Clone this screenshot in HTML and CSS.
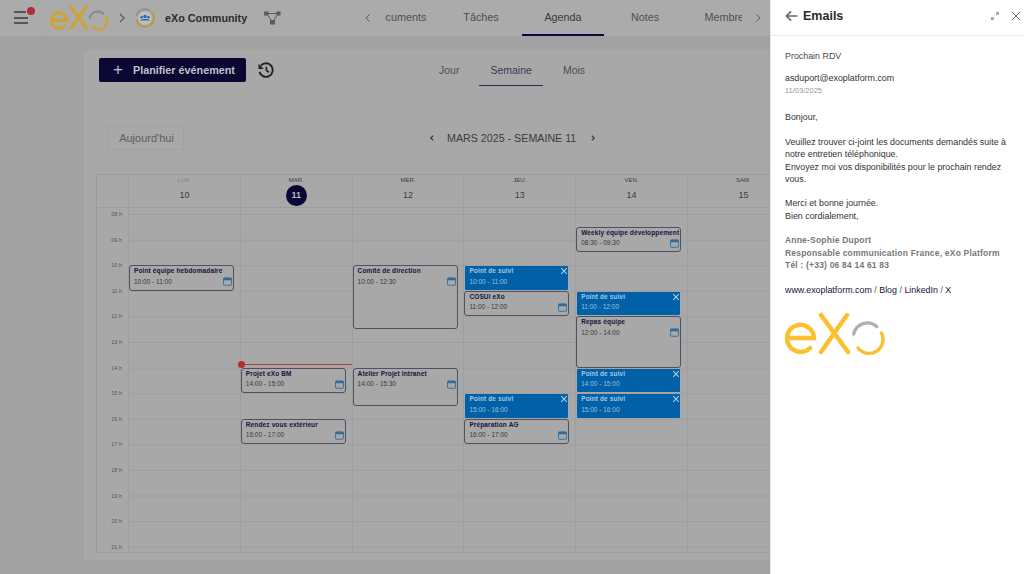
FILE: index.html
```html
<!DOCTYPE html>
<html lang="fr">
<head>
<meta charset="UTF-8">
<title>eXo Community - Agenda</title>
<link rel="stylesheet" href="styles.css">
</head>
<body>
<svg class="defs" width="0" height="0">
    <symbol id="exo-logo" viewBox="0 0 100 44">
        <g fill="none" stroke-linecap="round">
            <path class="logo-gold" d="M2 26H29A13.500 13.500 0 1 0 25 36"/>
            <path class="logo-gold" d="M36 3L63 40M62 3L36 40"/>
            <path class="logo-grey" d="M68.700 22A14 14 0 0 1 91.700 14.500"/>
            <path class="logo-gold thin" d="M96.500 21A14 14 0 0 1 73 36"/>
        </g>
    </symbol>
    <symbol id="cal" viewBox="0 0 10 10">
        <rect x="0.600" y="1" width="8.800" height="8.200" rx="1" fill="none" stroke="currentColor" stroke-width="1"/>
        <rect x="0.600" y="1" width="8.800" height="2.600" fill="currentColor"/>
    </symbol>
    <symbol id="cross" viewBox="0 0 10 10">
        <path d="M1.500 1.500L8.500 8.500M8.500 1.500L1.500 8.500" fill="none" stroke="currentColor" stroke-width="1.300"/>
    </symbol>
</svg>

<div class="app">
    <header class="topbar">
        <div class="menu-btn">
            <span class="burger"><i class="short"></i><i></i><i></i></span>
            <span class="dot"></span>
        </div>
        <svg class="top-logo"><use href="#exo-logo"/></svg>
        <svg class="crumb" viewBox="0 0 10 10"><path d="M3 1L7 5L3 9" fill="none" stroke="currentColor" stroke-width="1.300"/></svg>
        <svg class="space-icon" viewBox="0 0 20 20">
            <circle cx="10" cy="10" r="6.600" fill="#bcc0c4"/>
            <path d="M1.400 8A8.800 8.800 0 0 1 15 2.800" fill="none" stroke="#8f8f8f" stroke-width="1.600"/>
            <path d="M17 4.600A8.800 8.800 0 1 1 1.400 11.600" fill="none" stroke="#bd982f" stroke-width="1.800"/>
            <circle cx="10" cy="8.400" r="1.700" fill="#2c68a0"/>
            <circle cx="6.600" cy="9.200" r="1.300" fill="#2c68a0"/>
            <circle cx="13.400" cy="9.200" r="1.300" fill="#2c68a0"/>
            <path d="M5 12.600c.4-2 9.600-2 10 0z" fill="#2c68a0"/>
        </svg>
        <span class="space-name">eXo Community</span>
        <svg class="net-icon" viewBox="0 0 17 14">
            <path d="M2 2.500H15M3 3L8.500 11M14 3L8.500 11" stroke="#5c5c5c" stroke-width="1"/>
            <rect x="0" y="0.500" width="4.500" height="4" fill="#5c5c5c"/>
            <rect x="12.500" y="0.500" width="4" height="4" fill="#5c5c5c"/>
            <rect x="6" y="9" width="5" height="4.500" fill="#5c5c5c"/>
        </svg>
        <svg class="tab-arrow arrow-left" viewBox="0 0 10 10"><path d="M6.500 1.500L3 5L6.500 8.500" fill="none" stroke="currentColor" stroke-width="1"/></svg>
        <nav class="space-tabs">
            <div class="space-tabs-inner">
                <a>Documents</a>
                <a>Tâches</a>
                <a class="active">Agenda</a>
                <a>Notes</a>
                <a>Membres</a>
            </div>
        </nav>
        <svg class="tab-arrow" viewBox="0 0 10 10"><path d="M3.500 1.500L7 5L3.500 8.500" fill="none" stroke="currentColor" stroke-width="1"/></svg>
    </header>

    <main class="page">
        <section class="card">
            <div class="toolbar">
                <button class="add-btn"><span class="plus">+</span>Planifier événement</button>
                <svg class="history" viewBox="0 0 24 24">
                    <path d="M5.200 6.200A9 9 0 1 1 3.300 14.500" fill="none" stroke="currentColor" stroke-width="2.600"/>
                    <path d="M2 3.500V10.500H9z" fill="currentColor"/>
                    <path d="M12.500 7.500V12.500L15.800 15" fill="none" stroke="currentColor" stroke-width="2.200"/>
                </svg>
                <div class="view-tabs">
                    <a>Jour</a>
                    <a class="active">Semaine</a>
                    <a>Mois</a>
                </div>
                <div class="filter-btn"></div>
            </div>
            <div class="date-row">
                <button class="today-btn">Aujourd'hui</button>
                <div class="date-nav">
                    <svg viewBox="0 0 10 10"><path d="M6.500 2L3.500 5L6.500 8" fill="none" stroke="currentColor" stroke-width="1.600"/></svg>
                    <span>MARS 2025 - SEMAINE 11</span>
                    <svg viewBox="0 0 10 10"><path d="M3.500 2L6.500 5L3.500 8" fill="none" stroke="currentColor" stroke-width="1.600"/></svg>
                </div>
            </div>

            <div class="calendar">
                <div class="week-head">
                    <div class="head-gutter"></div>
                    <div class="head-day past"><small>LUN.</small><b>10</b></div>
                    <div class="head-day today"><small>MAR.</small><b>11</b></div>
                    <div class="head-day"><small>MER.</small><b>12</b></div>
                    <div class="head-day"><small>JEU.</small><b>13</b></div>
                    <div class="head-day"><small>VEN.</small><b>14</b></div>
                    <div class="head-day"><small>SAM.</small><b>15</b></div>
                </div>
                <div class="week-body">
                    <div class="hours">
                        <span>08 h</span><span>09 h</span><span>10 h</span><span>11 h</span><span>12 h</span><span>13 h</span><span>14 h</span>
                        <span>15 h</span><span>16 h</span><span>17 h</span><span>18 h</span><span>19 h</span><span>20 h</span><span>21 h</span>
                    </div>
                    <div class="day">
                        <div class="event" style="top:57.200px;height:25.600px">
                            <strong>Point équipe hebdomadaire</strong><span>10:00 - 11:00</span>
                            <svg class="ev-cal"><use href="#cal"/></svg>
                        </div>
                    </div>
                    <div class="day">
                        <div class="now-line" style="top:155.500px"></div>
                        <div class="event" style="top:159.600px;height:25.600px">
                            <strong>Projet eXo BM</strong><span>14:00 - 15:00</span>
                            <svg class="ev-cal"><use href="#cal"/></svg>
                        </div>
                        <div class="event" style="top:210.800px;height:25.600px">
                            <strong>Rendez vous extérieur</strong><span>16:00 - 17:00</span>
                            <svg class="ev-cal"><use href="#cal"/></svg>
                        </div>
                    </div>
                    <div class="day">
                        <div class="event" style="top:57.200px;height:64px">
                            <strong>Comité de direction</strong><span>10:00 - 12:30</span>
                            <svg class="ev-cal"><use href="#cal"/></svg>
                        </div>
                        <div class="event" style="top:159.600px;height:38.400px">
                            <strong>Atelier Projet Intranet</strong><span>14:00 - 15:30</span>
                            <svg class="ev-cal"><use href="#cal"/></svg>
                        </div>
                    </div>
                    <div class="day">
                        <div class="event busy" style="top:57.200px;height:25.600px">
                            <strong>Point de suivi</strong><span>10:00 - 11:00</span>
                            <svg class="ev-x"><use href="#cross"/></svg>
                        </div>
                        <div class="event" style="top:82.800px;height:25.600px">
                            <strong>COSUI eXo</strong><span>11:00 - 12:00</span>
                            <svg class="ev-cal"><use href="#cal"/></svg>
                        </div>
                        <div class="event busy" style="top:185.200px;height:25.600px">
                            <strong>Point de suivi</strong><span>15:00 - 16:00</span>
                            <svg class="ev-x"><use href="#cross"/></svg>
                        </div>
                        <div class="event" style="top:210.800px;height:25.600px">
                            <strong>Préparation AG</strong><span>16:00 - 17:00</span>
                            <svg class="ev-cal"><use href="#cal"/></svg>
                        </div>
                    </div>
                    <div class="day">
                        <div class="event" style="top:18.800px;height:25.600px">
                            <strong>Weekly équipe développement</strong><span>08:30 - 09:30</span>
                            <svg class="ev-cal"><use href="#cal"/></svg>
                        </div>
                        <div class="event busy" style="top:82.800px;height:25.600px">
                            <strong>Point de suivi</strong><span>11:00 - 12:00</span>
                            <svg class="ev-x"><use href="#cross"/></svg>
                        </div>
                        <div class="event" style="top:108.400px;height:51.200px">
                            <strong>Repas équipe</strong><span>12:00 - 14:00</span>
                            <svg class="ev-cal"><use href="#cal"/></svg>
                        </div>
                        <div class="event busy" style="top:159.600px;height:25.600px">
                            <strong>Point de suivi</strong><span>14:00 - 15:00</span>
                            <svg class="ev-x"><use href="#cross"/></svg>
                        </div>
                        <div class="event busy" style="top:185.200px;height:25.600px">
                            <strong>Point de suivi</strong><span>15:00 - 16:00</span>
                            <svg class="ev-x"><use href="#cross"/></svg>
                        </div>
                    </div>
                    <div class="day"></div>
                </div>
            </div>
        </section>
    </main>
</div>

<aside class="drawer">
    <header class="drawer-head">
        <svg class="back" viewBox="0 0 14 12"><path d="M13.500 6H1.500M6.500 1L1.500 6L6.500 11" fill="none" stroke="currentColor" stroke-width="1.700"/></svg>
        <h2>Emails</h2>
        <svg class="expand" viewBox="0 0 10 10"><path d="M5.800 1H9V4.200L7.900 3.100L6.600 4.400L5.600 3.400L6.900 2.100zM4.200 9H1V5.800L2.100 6.900L3.400 5.600L4.400 6.600L3.100 7.900z" fill="currentColor"/></svg>
        <svg class="close" viewBox="0 0 10 10"><path d="M1 1L9 9M9 1L1 9" fill="none" stroke="currentColor" stroke-width="1"/></svg>
    </header>
    <div class="mail">
        <p class="subject">Prochain RDV</p>
        <p class="sender">asduport@exoplatform.com</p>
        <p class="mail-date">11/03/2025</p>
        <p class="gap">Bonjour,</p>
        <p>Veuillez trouver ci-joint les documents demandés suite à notre entretien téléphonique.<br>Envoyez moi vos disponibilités pour le prochain rendez vous.</p>
        <p>Merci et bonne journée.<br>Bien cordialement,</p>
        <p class="signature">Anne-Sophie Duport<br>Responsable communication France, eXo Platform<br>Tél : (+33) 06 84 14 61 83</p>
        <p class="links"><a>www.exoplatform.com</a> / <a>Blog</a> / <a>LinkedIn</a> / <a>X</a></p>
        <svg class="mail-logo"><use href="#exo-logo"/></svg>
    </div>
</aside>
</body>
</html>
```

FILE: styles.css
```css
* {
    box-sizing: border-box;
}
html, body {
    height: 100%;
}
body {
    margin: 0;
    overflow: hidden;
    font-family: "Liberation Sans", Arial, sans-serif;
    background-color: #a2a2a2;
    color: #333;
}
.defs {
    position: absolute;
}
.logo-gold {
    stroke: var(--logo-gold, #fbc02d);
    stroke-width: var(--logo-weight, 4.500);
}
.logo-gold.thin, .logo-grey {
    stroke-width: var(--logo-thin, 3.400);
}
.logo-grey {
    stroke: var(--logo-grey, #aeb0b3);
}
.app {
    width: 1024px;
    height: 574px;
    display: flex;
    flex-direction: column;
}

/* top bar */
.topbar {
    height: 36px;
    flex: none;
    display: flex;
    align-items: center;
    background-color: #ababab;
    color: #5c5c5c;
}
.menu-btn {
    width: 43px;
    height: 36px;
    flex: none;
    position: relative;
    padding: 11px 0 0 14px;
    border-right: 1px solid #a6a6a6;
}
.burger {
    display: block;
    width: 14px;
}
.burger i {
    display: block;
    height: 2px;
    margin-bottom: 3.500px;
    background-color: #555;
}
.burger i.short {
    width: 12px;
}
.dot {
    position: absolute;
    left: 27px;
    top: 7px;
    width: 8px;
    height: 8px;
    border-radius: 50%;
    background-color: #b0303a;
}
.top-logo {
    --logo-gold: #cba433;
    --logo-grey: #8c8c8c;
    --logo-weight: 5.500;
    --logo-thin: 4;
    width: 58px;
    height: 26px;
    margin-left: 7px;
    flex: none;
}
.crumb {
    width: 10px;
    height: 10px;
    margin-left: 9px;
    flex: none;
}
.space-icon {
    width: 20px;
    height: 20px;
    margin-left: 8px;
    flex: none;
}
.space-name {
    margin-left: 10px;
    width: 82px;
    flex: none;
    font-size: 10.800px;
    font-weight: bold;
    color: #2c2c2c;
    white-space: nowrap;
}
.net-icon {
    width: 17px;
    height: 14px;
    margin-left: 17px;
    flex: none;
}
.tab-arrow {
    width: 10px;
    height: 10px;
    flex: none;
    margin-left: 11px;
}
.arrow-left {
    margin-left: 82px;
}
.space-tabs {
    width: 357px;
    height: 36px;
    margin-left: 12px;
    overflow: hidden;
    flex: none;
}
.space-tabs-inner {
    display: flex;
    margin-left: -27px;
}
.space-tabs a {
    width: 82px;
    height: 36px;
    flex: none;
    line-height: 34px;
    text-align: center;
    font-size: 10.800px;
    color: #4f4f4f;
}
.space-tabs a.active {
    border-bottom: 2px solid #0c0a3a;
    color: #3b3b3b;
}

/* calendar card */
.page {
    flex: 1;
    padding: 14px 0 0 84px;
    overflow: hidden;
}
.card {
    width: 940px;
    height: 510px;
    padding: 8px 0 0 12px;
    background-color: #a8a8a8;
}
.toolbar {
    height: 28px;
    display: flex;
    align-items: flex-start;
    padding-left: 3px;
}
.add-btn {
    width: 147px;
    height: 24px;
    flex: none;
    display: flex;
    align-items: center;
    padding: 0 0 0 14px;
    border: 0;
    border-radius: 2px;
    background-color: #0a0733;
    color: #c0c0c9;
    font: bold 10.800px "Liberation Sans", Arial, sans-serif;
}
.plus {
    font-size: 17px;
    font-weight: normal;
    margin-right: 10px;
    line-height: 20px;
}
.history {
    width: 18px;
    height: 18px;
    margin: 3px 0 0 11px;
    flex: none;
    color: #222;
}
.view-tabs {
    display: flex;
    margin-left: 153px;
}
.view-tabs a {
    display: block;
    height: 28px;
    padding: 0 11px;
    margin-right: 9px;
    line-height: 24px;
    font-size: 10.500px;
    color: #4f4f4f;
}
.view-tabs a.active {
    color: #3a3a55;
    border-bottom: 1px solid #2a2850;
}
.filter-btn {
    width: 60px;
    height: 26px;
    flex: none;
    margin-left: 167px;
    border: 1px solid #a0a0a0;
    border-radius: 2px;
}
.date-row {
    display: flex;
    align-items: center;
    height: 24px;
    margin-top: 40px;
    padding-left: 11px;
}
.today-btn {
    width: 77px;
    height: 24px;
    flex: none;
    padding: 0 0 0 2px;
    border: 1px solid #a0a0a0;
    border-radius: 2px;
    background: none;
    color: #5e5e5e;
    font: 11px "Liberation Sans", Arial, sans-serif;
}
.date-nav {
    display: flex;
    align-items: center;
    margin-left: 244px;
    font-size: 10.700px;
    color: #3c3c3c;
    white-space: nowrap;
}
.date-nav svg {
    width: 8px;
    height: 8px;
    flex: none;
}
.date-nav span {
    margin: 0 13px 0 11px;
}

/* week grid */
.calendar {
    margin-top: 24px;
    width: 704px;
    border-left: 1px solid #9b9b9b;
    border-top: 1px solid #9b9b9b;
}
.week-head, .week-body {
    display: grid;
    grid-template-columns: 32px repeat(6, 111.800px);
}
.week-head {
    height: 33px;
    border-bottom: 1px solid #9e9e9e;
}
.head-gutter, .head-day {
    border-right: 1px solid #9e9e9e;
}
.head-day {
    text-align: center;
    padding-top: 1px;
    color: #3c3c3c;
}
.head-day small {
    display: block;
    height: 9px;
    line-height: 9px;
    font-size: 6px;
}
.head-day b {
    display: block;
    height: 20px;
    line-height: 20px;
    font-size: 9px;
    font-weight: normal;
}
.head-day.past small {
    color: #858585;
}
.head-day.today b {
    width: 21px;
    height: 21px;
    line-height: 21px;
    margin: 0 auto;
    border-radius: 50%;
    background-color: #0a0733;
    color: #b9b9c0;
    font-weight: bold;
}
.week-body {
    height: 345px;
    overflow: hidden;
    border-bottom: 1px solid #9e9e9e;
}
.hours {
    border-right: 1px solid #9e9e9e;
    padding-top: 1px;
}
.hours span {
    display: block;
    height: 25.600px;
    line-height: 10px;
    padding-right: 6px;
    text-align: right;
    font-size: 5.500px;
    color: #555;
}
.day {
    position: relative;
    border-right: 1px solid #9e9e9e;
    background-image: linear-gradient(#9e9e9e 1px, transparent 1px);
    background-size: 100% 25.600px;
    background-position: 0 6px;
}
.event {
    position: absolute;
    left: 0;
    width: 105px;
    padding-left: 4px;
    border: 1px solid #505060;
    border-radius: 3px;
    background-color: #a8a8a8;
    font-size: 6.500px;
    color: #3a3a3a;
    overflow: hidden;
}
.event strong {
    display: block;
    height: 10px;
    line-height: 10px;
    font-size: 6.500px;
    letter-spacing: 0.130px;
    color: #17153a;
    white-space: nowrap;
}
.event span {
    display: block;
    line-height: 10px;
    margin-top: 0.700px;
}
.event.busy {
    border-color: transparent;
    border-radius: 2px;
    background-color: #0060a8;
    background-clip: padding-box;
    color: #9cc0dc;
}
.event.busy strong {
    color: #a9c6dd;
}
.ev-cal {
    position: absolute;
    right: 1px;
    top: 11px;
    width: 9px;
    height: 9px;
    color: #2f6c99;
}
.ev-x {
    position: absolute;
    right: 0;
    top: 1px;
    width: 8px;
    height: 8px;
    color: #b4cde0;
}
.now-line {
    position: absolute;
    left: 0;
    right: 0;
    height: 1px;
    background-color: #b0403f;
}
.now-line::before {
    content: "";
    position: absolute;
    left: -3px;
    top: -3px;
    width: 7px;
    height: 7px;
    border-radius: 50%;
    background-color: #b82c2c;
}

/* email drawer */
.drawer {
    position: absolute;
    top: 0;
    right: 0;
    bottom: 0;
    width: 254px;
    background-color: #fff;
    border-left: 1px solid #e4e4e4;
}
.drawer-head {
    height: 36px;
    display: flex;
    align-items: center;
    padding: 0 3px 4px 14px;
    border-bottom: 1px solid #ececec;
    color: #666;
}
.drawer-head h2 {
    margin: 0 0 0 5px;
    font-size: 12.500px;
    color: #2a2a2a;
}
.back {
    width: 13px;
    height: 12px;
    flex: none;
}
.expand {
    width: 10px;
    height: 10px;
    flex: none;
    margin-left: auto;
    color: #999;
}
.close {
    width: 10px;
    height: 10px;
    flex: none;
    margin-left: 11px;
    color: #777;
}
.mail {
    padding: 14px 14px 0 14px;
    font-size: 8.900px;
    line-height: 12.300px;
    color: #333;
}
.mail p {
    margin: 0 0 12.300px;
}
.mail .subject {
    margin-bottom: 10px;
    color: #4a4a4a;
}
.mail .sender {
    margin-bottom: 0;
}
.mail .mail-date {
    margin-bottom: 14.500px;
    font-size: 7.500px;
    color: #999;
}
.mail .signature {
    font-size: 8.500px;
    font-weight: bold;
    color: #777;
    letter-spacing: 0.200px;
}
.mail .links {
    color: #555;
    margin-bottom: 16px;
}
.links a {
    color: #14123a;
}
.mail-logo {
    display: block;
    width: 100px;
    height: 44px;
}
```
